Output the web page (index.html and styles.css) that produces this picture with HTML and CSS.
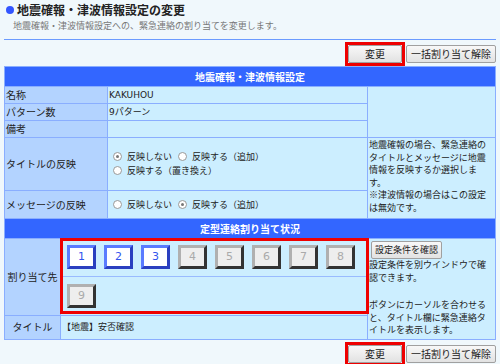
FILE: index.html
```html
<!DOCTYPE html>
<html lang="ja">
<head>
    <meta charset="UTF-8">
    <meta name="viewport" content="width=device-width, initial-scale=1.0">
    <title>地震確報・津波情報設定の変更</title>
    <link rel="stylesheet" href="styles.css">
</head>
<body>
    <h1 class="page-title"><span class="dot"></span>地震確報・津波情報設定の変更</h1>
    <p class="lead">地震確報・津波情報設定への、緊急連絡の割り当てを変更します。</p>

    <div class="actions">
        <span class="mark"><button type="button" class="btn btn-main">変更</button></span>
        <button type="button" class="btn">一括割り当て解除</button>
    </div>

    <table class="grid">
        <colgroup>
            <col class="col-label">
            <col class="col-value">
            <col>
        </colgroup>
        <tr>
            <th colspan="3" class="head">地震確報・津波情報設定</th>
        </tr>
        <tr>
            <td class="label">名称</td>
            <td class="value">KAKUHOU</td>
            <td class="note" rowspan="3"></td>
        </tr>
        <tr>
            <td class="label">パターン数</td>
            <td class="value">9パターン</td>
        </tr>
        <tr>
            <td class="label">備考</td>
            <td class="value"></td>
        </tr>
        <tr class="row-title">
            <td class="label">タイトルの反映</td>
            <td class="value radios">
                <label class="opt"><span class="radio on"></span>反映しない</label><label class="opt"><span class="radio"></span>反映する（追加）</label><br>
                <label class="opt"><span class="radio"></span>反映する（置き換え）</label>
            </td>
            <td class="note note-top" rowspan="2">地震確報の場合、緊急連絡のタイトルとメッセージに地震情報を反映するか選択します。<br>※津波情報の場合はこの設定は無効です。</td>
        </tr>
        <tr class="row-msg">
            <td class="label">メッセージの反映</td>
            <td class="value radios">
                <label class="opt"><span class="radio"></span>反映しない</label><label class="opt"><span class="radio on"></span>反映する（追加）</label>
            </td>
        </tr>
    </table>

    <table class="grid grid-assign">
        <colgroup>
            <col class="col-label-sm">
            <col class="col-slots">
            <col>
        </colgroup>
        <tr>
            <th colspan="3" class="head">定型連絡割り当て状況</th>
        </tr>
        <tr class="row-slots">
            <td class="label center">割り当て先</td>
            <td class="value slots">
                <div class="slot-row">
                    <span class="slot set">1</span>
                    <span class="slot set">2</span>
                    <span class="slot set">3</span>
                    <span class="slot empty">4</span>
                    <span class="slot empty">5</span>
                    <span class="slot empty">6</span>
                    <span class="slot empty">7</span>
                    <span class="slot empty">8</span>
                </div>
                <div class="slot-row">
                    <span class="slot empty">9</span>
                </div>
            </td>
            <td class="note note-side" rowspan="2">
                <button type="button" class="btn btn-small">設定条件を確認</button>
                <p>設定条件を別ウインドウで確認できます。</p>
                <p class="gap">ボタンにカーソルを合わせると、タイトル欄に緊急連絡タイトルを表示します。</p>
            </td>
        </tr>
        <tr class="row-name">
            <td class="label center">タイトル</td>
            <td class="value">【地震】安否確認</td>
        </tr>
    </table>

    <div class="actions actions-bottom">
        <span class="mark"><button type="button" class="btn btn-main">変更</button></span>
        <button type="button" class="btn">一括割り当て解除</button>
    </div>
</body>
</html>
```

FILE: styles.css
```css
body {
    margin: 0;
    padding: 2px 4px 0;
    background-color: #f0f8fc;
    font-family: "DejaVu Sans", "Noto Sans CJK JP", sans-serif;
    color: #222;
}
.page-title {
    display: flex;
    align-items: center;
    margin: 0;
    height: 16px;
    font-family: "Noto Sans CJK JP", sans-serif;
    font-size: 12px;
    font-weight: bold;
    line-height: 16px;
}
.dot {
    width: 8px;
    height: 8px;
    margin: 0 3px 0 2px;
    border-radius: 50%;
    background-color: #3355ff;
}
.lead {
    margin: 2px 0 0;
    padding: 0 0 7px 9px;
    font-family: "Noto Sans CJK JP", sans-serif;
    font-size: 9px;
    line-height: 12px;
    color: #777;
    border-bottom: 1px solid #6b9bff;
}
.actions {
    display: flex;
    justify-content: flex-end;
    align-items: center;
    gap: 1px;
    margin-top: 2px;
}
.actions-bottom {
    margin-top: 2px;
}
.mark {
    display: inline-flex;
    border: 3px solid #ee0000;
}
.btn {
    height: 18px;
    padding: 0 4px;
    font-family: "Noto Sans CJK JP", sans-serif;
    font-size: 10px;
    line-height: 16px;
    color: #222;
    background: linear-gradient(#f8f8f8, #e2e2e2);
    border: 1px solid #a0a0a0;
    border-radius: 2px;
}
.btn-main {
    width: 54px;
}
.btn-small {
    display: block;
    margin: 0 0 0 2px;
    padding: 0 3px;
    font-size: 9px;
}

/* tables */
.grid {
    width: 100%;
    border-collapse: collapse;
    table-layout: fixed;
}
.grid-assign {
    margin-top: -1px;
}
.col-label {
    width: 103px;
}
.col-value {
    width: 260px;
}
.col-label-sm {
    width: 56px;
}
.col-slots {
    width: 307px;
}
.grid th,
.grid td {
    border: 1px solid #8aaeff;
    padding: 0 1px;
}
.head {
    height: 19px;
    background-color: #3366ff;
    color: #fff;
    font-family: "Noto Sans CJK JP", sans-serif;
    font-size: 10px;
    font-weight: bold;
    line-height: 18px;
}
.label {
    height: 16px;
    background-color: #b3d3ff;
    font-family: "Noto Sans CJK JP", sans-serif;
    font-size: 10px;
    line-height: 16px;
}
.center {
    text-align: center;
}
.value {
    background-color: #cceeff;
    font-size: 9px;
    line-height: 16px;
}
.note {
    background-color: #cceeff;
    font-family: "Noto Sans CJK JP", sans-serif;
    font-size: 9px;
    line-height: 12.5px;
    vertical-align: top;
}
.grid .note-top {
    padding: 1px 6px 0 1px;
}
.grid .note-side {
    padding: 2px 6px 2px 1px;
}
.note p {
    margin: 0;
}
.note p.gap {
    margin-top: 15px;
}
.row-title td {
    height: 52px;
}
.row-msg td {
    height: 27px;
}
.radios {
    line-height: 14px;
}
.opt {
    margin-right: 2px;
}
.radio {
    position: relative;
    display: inline-block;
    width: 7px;
    height: 7px;
    margin: 0 5px 0 4px;
    border: 1px solid #999;
    border-radius: 50%;
    background-color: #fff;
    vertical-align: -1px;
}
.radio.on::after {
    content: "";
    position: absolute;
    top: 2px;
    left: 2px;
    right: 2px;
    bottom: 2px;
    border-radius: 50%;
    background-color: #777;
}

/* assignment slots */
.grid .slots {
    position: relative;
    padding: 0;
    vertical-align: top;
}
.slots::after {
    content: "";
    position: absolute;
    top: -1px;
    left: -1px;
    right: -2px;
    bottom: 1px;
    border: 3px solid #ee0000;
    pointer-events: none;
}
.slot-row {
    display: flex;
    gap: 8px;
    padding: 6px 0 7px 6px;
}
.slot-row + .slot-row {
    padding: 7px 0 5px 6px;
    border-top: 1px solid #99bbff;
}
.slot {
    box-sizing: border-box;
    width: 29px;
    height: 24px;
    border: 3px solid;
    font-size: 11px;
    line-height: 18px;
    text-align: center;
}
.slot.set {
    background-color: #fff;
    color: #3355ee;
    border-color: #5a7bff #2a3fc0 #2a3fc0 #5a7bff;
}
.slot.empty {
    background-color: #eeeeee;
    color: #aaa;
    border-color: #b0b0b0 #333 #333 #b0b0b0;
}
.row-name td {
    height: 22px;
}
```
